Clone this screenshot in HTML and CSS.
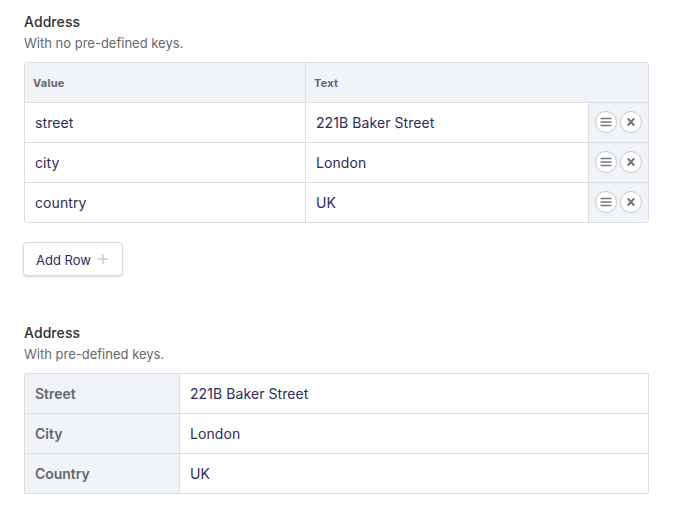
FILE: index.html
```html
<!DOCTYPE html>
<html lang="en">
<head>
<meta charset="utf-8">
<title>Address</title>
<link rel="stylesheet" href="styles.css">
</head>
<body>
<svg class="symbols" aria-hidden="true">
  <symbol id="drag" viewBox="0 0 12 10"><path d="M.5 1.5h11M.5 5h11M.5 8.5h11" stroke="#77787a" stroke-width="1.5"/></symbol>
  <symbol id="remove" viewBox="0 0 8 8"><path d="M.8.3l6.4 7.4M7.2.3L.8 7.7" stroke="#707173" stroke-width="2"/></symbol>
</svg>
<section class="field">
  <h2 class="label">Address</h2>
  <p class="help">With no pre-defined keys.</p>
  <div class="table editable">
    <div class="row head"><div class="cell">Value</div><div class="cell wide">Text</div></div>
    <div class="row"><div class="cell">street</div><div class="cell">221B Baker Street</div><div class="actions"><button class="round"><svg class="drag"><use href="#drag"/></svg></button><button class="round"><svg class="remove"><use href="#remove"/></svg></button></div></div>
    <div class="row"><div class="cell">city</div><div class="cell">London</div><div class="actions"><button class="round"><svg class="drag"><use href="#drag"/></svg></button><button class="round"><svg class="remove"><use href="#remove"/></svg></button></div></div>
    <div class="row"><div class="cell">country</div><div class="cell">UK</div><div class="actions"><button class="round"><svg class="drag"><use href="#drag"/></svg></button><button class="round"><svg class="remove"><use href="#remove"/></svg></button></div></div>
  </div>
  <button class="add">Add Row <svg class="plus" viewBox="0 0 10 10"><path d="M5 0v10M0 5h10" stroke="#c8c9cb" stroke-width="1.4"/></svg></button>
</section>
<section class="field">
  <h2 class="label">Address</h2>
  <p class="help">With pre-defined keys.</p>
  <div class="table keyed">
    <div class="row"><div class="cell key">Street</div><div class="cell">221B Baker Street</div></div>
    <div class="row"><div class="cell key">City</div><div class="cell">London</div></div>
    <div class="row"><div class="cell key">Country</div><div class="cell">UK</div></div>
  </div>
</section>
</body>
</html>
```
FILE: styles.css
```css
* { box-sizing: border-box; }
body {
  margin: 0;
  padding: 12px 24px 0;
  background: #fff;
  color: #2d2c5c;
  font: 14px/20px Inter, "Liberation Sans", sans-serif;
}
.symbols { display: none; }
.field { margin-bottom: 47px; }
.label { margin: 0; font-size: 14px; line-height: 20px; font-weight: 500; color: #303133; letter-spacing: .08px; }
.help { margin: 1px 0 9px; font-size: 13px; line-height: 20px; color: #68696b; letter-spacing: 0; }
.table { width: 625px; border: 1px solid #dcdee0; border-radius: 3px; overflow: hidden; }
.keyed { border-radius: 1px; }
.row { display: grid; height: 40px; border-bottom: 1px solid #dcdee0; }
.row:last-child { height: 39px; border-bottom: 0; }
.editable .row { grid-template-columns: 280px 283px 60px; }
.keyed .row { grid-template-columns: 154px 469px; }
.cell { padding: 10px 10px 0; letter-spacing: .08px; white-space: nowrap; }
.cell + .cell, .actions { border-left: 1px solid #dcdee0; }
.head { background: #f0f4f8; }
.head .cell { padding-left: 8px; font-size: 11px; font-weight: 700; color: #666769; letter-spacing: .25px; }
.wide { grid-column: 2 / 4; }
.cell.key { background: #f0f4f8; color: #666769; font-weight: 600; letter-spacing: -.03px; }
.actions { display: flex; gap: 3px; padding: 8px 0 0 6px; background: #f0f4f8; }
.round {
  display: flex; align-items: center; justify-content: center;
  width: 22px; height: 22px; padding: 0;
  border: 1px solid #c9cacb; border-radius: 50%; background: #fff;
}
.drag { width: 12px; height: 10px; }
.remove { width: 8px; height: 8px; }
.add {
  display: flex; align-items: center; gap: 7px;
  width: 100px; height: 34px; margin: 19px 0 0 -1px; padding: 2px 12px 0;
  border: 1px solid #d8dadd; border-radius: 4px; background: #fff;
  box-shadow: 0 1px 2px rgba(0, 0, 0, .15);
  font: 13px/20px Inter, "Liberation Sans", sans-serif; color: #2d2c5c; white-space: nowrap;
}
.plus { width: 10px; height: 10px; margin-top: -3px; flex: none; }
```
